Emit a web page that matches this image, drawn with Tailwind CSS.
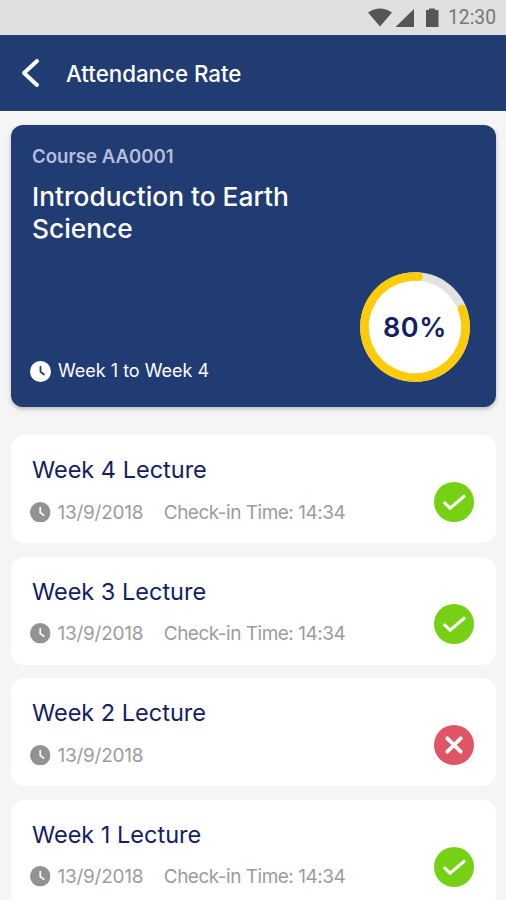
<!DOCTYPE html>
<html lang="en">
<head>
    <meta charset="UTF-8">
    <meta name="viewport" content="width=device-width, initial-scale=1.0">
    <title>Attendance Rate</title>
    <script src="https://cdn.jsdelivr.net/npm/@tailwindcss/browser@4"></script>
</head>
<body class="h-[900px] overflow-hidden bg-[#f5f5f5] font-['Inter',sans-serif]">
    <!-- Shared icons -->
    <svg class="hidden">
        <symbol id="clock" viewBox="0 0 20 20">
            <circle cx="10" cy="10" r="10" fill="currentColor" />
            <path d="M10 5.500v4.800l3.300 2.500" fill="none" stroke="var(--hand)" stroke-width="1.700" stroke-linecap="round" stroke-linejoin="round" />
        </symbol>
        <symbol id="present" viewBox="0 0 40 40">
            <circle cx="20" cy="20" r="20" fill="#76d014" />
            <path d="M9.800 20.200l6.300 6L31 13.500" fill="none" stroke="#fff" stroke-width="3" />
        </symbol>
        <symbol id="absent" viewBox="0 0 40 40">
            <circle cx="20" cy="20" r="20" fill="#df5566" />
            <path d="M13.3 13.3l13.4 13.4M26.7 13.3L13.3 26.7" fill="none" stroke="#fff" stroke-width="3.8" stroke-linecap="round" />
        </symbol>
    </svg>

    <div class="flex h-[35px] items-center justify-end bg-[#e0e0e0] pr-[10px] text-[#565656]">
        <svg class="h-[20px] w-[76px]" viewBox="0 0 76 20" fill="currentColor">
            <path d="M0 4.5Q12-3.5 24 4.5L12 18.5z" />
            <path d="M46 1v18H27.500z" />
            <path d="M58 2h3V.5h6V2h3.500v17H58z" />
        </svg>
        <span class="ml-[4px] pt-px font-['Roboto',sans-serif] text-[19.300px] text-[#777]">12:30</span>
    </div>

    <header class="flex h-[76px] items-center bg-[#213b73] pl-[21px] text-white">
        <svg class="h-[30px] w-[20px]" viewBox="0 0 20 30" fill="none" stroke="currentColor" stroke-width="4" stroke-linecap="round" stroke-linejoin="round">
            <path d="M16 3L3 15l13 12" />
        </svg>
        <h1 class="ml-[25px] pt-[2px] text-[22.300px] font-medium">Attendance Rate</h1>
    </header>

    <main class="pt-[14px] pr-[10px] pl-[11px]">
        <section class="flex h-[282px] justify-between rounded-[12px] bg-[#213b73] pr-[26.500px] pl-[21px] text-white shadow-[0_2px_4px_rgba(0,0,0,0.25)]">
            <div class="flex flex-col pt-[19px] pb-[24px]">
                <p class="text-[18.600px] leading-6 font-semibold text-[#b5bedb]">Course AA0001</p>
                <h2 class="mt-[13px] text-[26.300px] leading-8 font-medium">Introduction to Earth<br>Science</h2>
                <div class="mt-auto -ml-[2px] flex items-center">
                    <svg class="size-[21px] [--hand:#213b73]"><use href="#clock" /></svg>
                    <span class="ml-[7px] text-[18px] leading-6">Week 1 to Week 4</span>
                </div>
            </div>
            <div class="mb-[25.500px] grid size-[110px] shrink-0 self-end">
                <svg class="col-start-1 row-start-1" viewBox="0 0 110 110" fill="none">
                    <circle cx="55" cy="55" r="50.5" fill="#fff" stroke="#e2e2e2" stroke-width="8.600" />
                    <circle cx="55" cy="55" r="50.5" stroke="#fecb09" stroke-width="8.600" stroke-linecap="round" pathLength="100" stroke-dasharray="82 100" transform="rotate(-21 55 55)" />
                </svg>
                <span class="col-start-1 row-start-1 place-self-center pt-[3px] pl-px text-[27px] font-semibold tracking-[0.600px] text-[#14215f]">80%</span>
            </div>
        </section>

        <div class="mt-[28px] flex flex-col gap-[13.500px]">
            <article class="flex h-[108px] shrink-0 justify-between rounded-[14px] bg-white pt-[20px] pr-[22px] pl-[21px]">
                <div>
                    <h3 class="text-[23.500px] leading-[30px] text-[#14215f]">Week 4 Lecture</h3>
                    <div class="mt-[15.600px] -ml-[2px] flex items-center text-[19px] leading-6 tracking-[-0.500px] text-[#9c9c9c]">
                        <svg class="mb-px size-[20.500px] text-[#929292] [--hand:#fff]"><use href="#clock" /></svg>
                        <span class="ml-[7px] tracking-[-0.250px]">13/9/2018</span>
                        <span class="ml-[20.500px]">Check-in Time: 14:34</span>
                    </div>
                </div>
                <svg class="mt-[27px] size-[40px]"><use href="#present" /></svg>
            </article>

            <article class="flex h-[108px] shrink-0 justify-between rounded-[14px] bg-white pt-[20px] pr-[22px] pl-[21px]">
                <div>
                    <h3 class="text-[23.500px] leading-[30px] text-[#14215f]">Week 3 Lecture</h3>
                    <div class="mt-[15.600px] -ml-[2px] flex items-center text-[19px] leading-6 tracking-[-0.500px] text-[#9c9c9c]">
                        <svg class="mb-px size-[20.500px] text-[#929292] [--hand:#fff]"><use href="#clock" /></svg>
                        <span class="ml-[7px] tracking-[-0.250px]">13/9/2018</span>
                        <span class="ml-[20.500px]">Check-in Time: 14:34</span>
                    </div>
                </div>
                <svg class="mt-[27px] size-[40px]"><use href="#present" /></svg>
            </article>

            <article class="flex h-[108px] shrink-0 justify-between rounded-[14px] bg-white pt-[20px] pr-[22px] pl-[21px]">
                <div>
                    <h3 class="text-[23.500px] leading-[30px] text-[#14215f]">Week 2 Lecture</h3>
                    <div class="mt-[15.600px] -ml-[2px] flex items-center text-[19px] leading-6 tracking-[-0.500px] text-[#9c9c9c]">
                        <svg class="mb-px size-[20.500px] text-[#929292] [--hand:#fff]"><use href="#clock" /></svg>
                        <span class="ml-[7px] tracking-[-0.250px]">13/9/2018</span>
                    </div>
                </div>
                <svg class="mt-[27px] size-[40px]"><use href="#absent" /></svg>
            </article>

            <article class="flex h-[108px] shrink-0 justify-between rounded-[14px] bg-white pt-[20px] pr-[22px] pl-[21px]">
                <div>
                    <h3 class="text-[23.500px] leading-[30px] text-[#14215f]">Week 1 Lecture</h3>
                    <div class="mt-[15.600px] -ml-[2px] flex items-center text-[19px] leading-6 tracking-[-0.500px] text-[#9c9c9c]">
                        <svg class="mb-px size-[20.500px] text-[#929292] [--hand:#fff]"><use href="#clock" /></svg>
                        <span class="ml-[7px] tracking-[-0.250px]">13/9/2018</span>
                        <span class="ml-[20.500px]">Check-in Time: 14:34</span>
                    </div>
                </div>
                <svg class="mt-[27px] size-[40px]"><use href="#present" /></svg>
            </article>
        </div>
    </main>
</body>
</html>
